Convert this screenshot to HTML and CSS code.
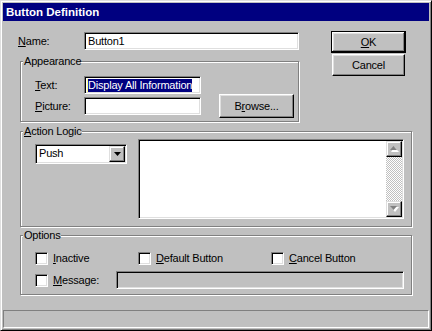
FILE: index.html
```html
<!DOCTYPE html>
<html lang="en">
<head>
  <meta charset="UTF-8" />
  <title>Button Definition</title>
  <link rel="stylesheet" href="styles.css">
</head>
<body>
  <div class="window">
    <div class="titlebar">Button Definition</div>

    <div class="content">
      <div class="top">
        <div class="main">
          <div class="name-row">
            <label class="lbl lbl-name"><u>N</u>ame:</label>
            <div class="edit name-edit">Button1</div>
          </div>

          <fieldset class="group appearance">
            <legend>Appearance</legend>
            <div class="field-row">
              <label class="lbl lbl-app"><u>T</u>ext:</label>
              <div class="edit short-edit"><span class="sel">Display All Information</span></div>
            </div>
            <div class="field-row pic-row">
              <label class="lbl lbl-app"><u>P</u>icture:</label>
              <div class="edit short-edit"></div>
              <button class="btn browse">B<u>r</u>owse...</button>
            </div>
          </fieldset>
        </div>

        <div class="actions">
          <button class="btn btn-default"><u>O</u>K</button>
          <button class="btn btn-cancel">Cancel</button>
        </div>
      </div>

      <fieldset class="group logic">
        <legend><u>A</u>ction Logic</legend>
        <div class="combo">
          <span class="combo-text">Push</span>
          <span class="combo-btn">
            <svg width="7" height="4" viewBox="0 0 7 4"><path d="M0 0h7L3.5 4z" fill="#000"/></svg>
          </span>
        </div>
        <div class="memo">
          <div class="memo-body"></div>
          <div class="vscroll">
            <span class="sb-btn">
              <svg width="9" height="6" viewBox="0 0 9 6"><path d="M4.5 1L9 6H1z" fill="#fff"/><path d="M3.5 0L7 4H0z" fill="#808080"/></svg>
            </span>
            <span class="sb-track"></span>
            <span class="sb-btn">
              <svg width="9" height="6" viewBox="0 0 9 6"><path d="M1 1h8L5 6z" fill="#fff"/><path d="M0 0h7L3.5 4z" fill="#808080"/></svg>
            </span>
          </div>
        </div>
      </fieldset>

      <fieldset class="group options">
        <legend>Options</legend>
        <div class="opt-row">
          <label class="check"><span class="box"></span><span><u>I</u>nactive</span></label>
          <label class="check"><span class="box"></span><span><u>D</u>efault Button</span></label>
          <label class="check"><span class="box"></span><span><u>C</u>ancel Button</span></label>
        </div>
        <div class="opt-row msg-row">
          <label class="check"><span class="box"></span><span><u>M</u>essage:</span></label>
          <div class="edit msg-edit"></div>
        </div>
      </fieldset>
    </div>

    <div class="statusbar"></div>
  </div>
</body>
</html>
```

FILE: styles.css
```css
* {
  box-sizing: border-box;
}
html, body {
  margin: 0;
}
body {
  font-family: "Liberation Sans", Arial, sans-serif;
  font-size: 11px;
  line-height: 13px;
  letter-spacing: -0.2px;
  color: #000;
  background: #c0c0c0;
}
u {
  text-decoration-thickness: 1px;
  text-underline-offset: 1px;
}

.window {
  width: 432px;
  height: 331px;
  display: flex;
  flex-direction: column;
  background: #c0c0c0;
  border: 1px solid;
  border-color: #dfdfdf #000 #000 #dfdfdf;
  box-shadow: inset 1px 1px #fff, inset -1px -1px #808080;
  padding: 2px;
}
.titlebar {
  flex: none;
  height: 18px;
  background: #000080;
  color: #fff;
  font-weight: bold;
  font-size: 11.5px;
  line-height: 18px;
  letter-spacing: 0;
  padding-left: 3px;
}
.content {
  flex: 1;
  padding: 10px 0 0 15px;
}
.statusbar {
  flex: none;
  height: 18px;
  border: 1px solid;
  border-color: #808080 #fff #fff #808080;
}

/* sunken edit box */
.edit {
  height: 18px;
  background: #fff;
  border: 1px solid;
  border-color: #808080 #fff #fff #808080;
  box-shadow: inset 1px 1px #000, inset -1px -1px #dfdfdf;
  padding: 2px 3px 0 3px;
  white-space: nowrap;
  overflow: hidden;
}
.sel {
  display: inline-block;
  margin-left: -1px;
  border-left: 1px solid #ffff80;
  background: #000080;
  color: #fff;
  line-height: 13px;
}

/* raised button */
.btn {
  font: inherit;
  letter-spacing: inherit;
  color: #000;
  background: #c0c0c0;
  padding: 0;
  margin: 0;
  border: 1px solid;
  border-color: #fff #000 #000 #fff;
  box-shadow: inset -1px -1px #808080, inset 1px 1px #dfdfdf;
}
.btn-default {
  width: 75px;
  height: 22px;
  border: 1px solid #000;
  box-shadow: inset -1px -1px #000, inset 1px 1px #fff, inset -2px -2px #808080, inset 2px 2px #dfdfdf;
}
.btn-cancel {
  width: 73px;
  height: 22px;
  margin: 1px 0 0 1px;
}

.top {
  display: flex;
  align-items: flex-start;
}
.main {
  width: 281px;
}
.actions {
  display: flex;
  flex-direction: column;
  margin-left: 32px;
}
.name-row {
  display: flex;
  align-items: center;
  margin-top: 1px;
}
.lbl-name {
  width: 66px;
}
.name-edit {
  width: 215px;
}

/* etched group frame */
.group {
  margin: 0;
  padding: 0;
  min-inline-size: 0;
  border: 1px solid #808080;
  box-shadow: inset 1px 1px #fff, 1px 1px #fff;
}
.group legend {
  margin-left: -12px;
  padding: 0 0 0 1px;
  line-height: 13px;
  background: #c0c0c0;
}

.appearance {
  width: 279px;
  margin: 5px 0 0 2px;
  padding: 8px 0 3px 14px;
}
.field-row {
  display: flex;
  align-items: center;
}
.lbl-app {
  width: 49px;
}
.short-edit {
  width: 117px;
}
.browse {
  width: 75px;
  height: 24px;
  margin-left: 18px;
}

.logic {
  width: 392px;
  margin: 3px 0 0 2px;
  padding: 1px 0 7px 14px;
  display: flex;
  align-items: flex-start;
}
.combo {
  width: 92px;
  height: 20px;
  margin-top: 5px;
  display: flex;
  background: #fff;
  border: 1px solid;
  border-color: #808080 #fff #fff #808080;
  box-shadow: inset 1px 1px #000, inset -1px -1px #dfdfdf;
  padding: 1px;
}
.combo-text {
  flex: 1;
  padding-left: 2px;
  line-height: 14px;
}
.combo-btn {
  width: 16px;
  height: 16px;
  display: flex;
  align-items: center;
  justify-content: center;
  background: #c0c0c0;
  border: 1px solid;
  border-color: #dfdfdf #000 #000 #dfdfdf;
  box-shadow: inset -1px -1px #808080, inset 1px 1px #fff;
}
.memo {
  width: 266px;
  height: 80px;
  margin-left: 11px;
  display: flex;
  background: #fff;
  border: 1px solid;
  border-color: #808080 #fff #fff #808080;
  box-shadow: inset 1px 1px #000, inset -1px -1px #dfdfdf;
  padding: 1px;
}
.memo-body {
  flex: 1;
}
.vscroll {
  width: 16px;
  display: flex;
  flex-direction: column;
}
.sb-btn {
  height: 16px;
  display: flex;
  align-items: center;
  justify-content: center;
  background: #c0c0c0;
  border: 1px solid;
  border-color: #dfdfdf #000 #000 #dfdfdf;
  box-shadow: inset -1px -1px #808080, inset 1px 1px #fff;
}
.sb-track {
  flex: 1;
  background: repeating-conic-gradient(#c0c0c0 0 25%, #fff 0 50%) 0 0 / 2px 2px;
}

.options {
  width: 392px;
  margin: 2px 0 0 2px;
  padding: 10px 0 5px 14px;
}
.opt-row {
  display: grid;
  grid-template-columns: 103px 133px auto;
  align-items: center;
}
.msg-row {
  grid-template-columns: 81px auto;
  margin-top: 6px;
}
.check {
  display: flex;
  align-items: center;
}
.box {
  width: 13px;
  height: 13px;
  margin-right: 5px;
  background: #fff;
  border: 1px solid;
  border-color: #808080 #fff #fff #808080;
  box-shadow: inset 1px 1px #000, inset -1px -1px #dfdfdf;
}
.msg-edit {
  width: 288px;
  background: #c0c0c0;
}
```
